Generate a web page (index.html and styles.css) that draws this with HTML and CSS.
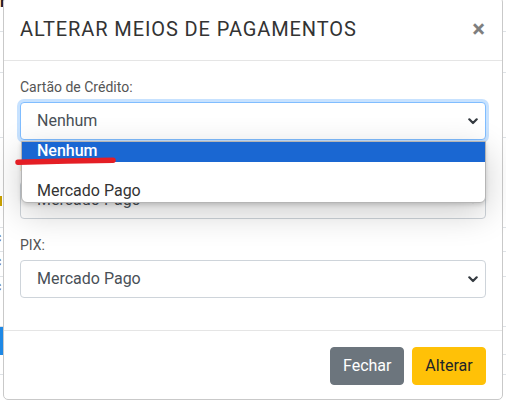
FILE: index.html
```html
<!DOCTYPE html>
<html lang="pt-BR">
<head>
<meta charset="utf-8">
<title>Alterar meios de pagamentos</title>
<link rel="stylesheet" href="styles.css">
</head>
<body>
<div class="page">
  <div class="prow prow-top"><span class="frag-dark">r</span></div>
  <div class="prow prow-a"></div>
  <div class="prow prow-b"></div>
  <div class="prow prow-c"><span class="frag-yellow"></span></div>
  <div class="prow prow-d"><span class="frag-c">c</span></div>
  <div class="prow prow-e"><span class="frag-c">c</span></div>
  <div class="prow prow-f"><span class="frag-c">c</span></div>
  <div class="prow prow-g"><span class="frag-blue">r</span></div>
  <div class="prow prow-h"></div>
</div>

<div class="modal">
  <div class="modal-header">
    <h5 class="modal-title">ALTERAR MEIOS DE PAGAMENTOS</h5>
    <span class="close">&times;</span>
  </div>
  <div class="modal-body">
    <div class="form-group">
      <label class="form-label">Cartão de Crédito:</label>
      <div class="select select-focus">
        <span class="select-text">Nenhum</span>
        <svg class="chev" width="10" height="7" viewBox="0 0 10 7"><path d="M1.3 1.3 L5 5 L8.7 1.3" fill="none" stroke="#343a40" stroke-width="2.2" stroke-linecap="round" stroke-linejoin="round"/></svg>
      </div>
    </div>
    <div class="form-group">
      <label class="form-label">Boleto:</label>
      <div class="select">
        <span class="select-text">Mercado Pago</span>
        <svg class="chev" width="10" height="7" viewBox="0 0 10 7"><path d="M1.3 1.3 L5 5 L8.7 1.3" fill="none" stroke="#343a40" stroke-width="2.2" stroke-linecap="round" stroke-linejoin="round"/></svg>
      </div>
    </div>
    <div class="form-group">
      <label class="form-label">PIX:</label>
      <div class="select">
        <span class="select-text">Mercado Pago</span>
        <svg class="chev" width="10" height="7" viewBox="0 0 10 7"><path d="M1.3 1.3 L5 5 L8.7 1.3" fill="none" stroke="#343a40" stroke-width="2.2" stroke-linecap="round" stroke-linejoin="round"/></svg>
      </div>
    </div>
  </div>
  <div class="modal-footer">
    <button class="btn btn-secondary">Fechar</button>
    <button class="btn btn-warning">Alterar</button>
  </div>

  <div class="dropdown">
    <div class="opt opt-selected">Nenhum</div>
    <div class="opt"></div>
    <div class="opt">Mercado Pago</div>
  </div>
  <svg class="mark" width="104" height="12" viewBox="0 0 104 12"><path d="M3 7.2 C 30 6.6, 70 5.6, 98 5.2" fill="none" stroke="#e41e25" stroke-width="5.5" stroke-linecap="round"/></svg>
</div>
</body>
</html>
```

FILE: styles.css
```css
* { box-sizing: border-box; }
html, body { margin: 0; padding: 0; }
body {
  width: 506px;
  height: 400px;
  overflow: hidden;
  background: #ffffff;
  font-family: Roboto, "Liberation Sans", sans-serif;
  position: relative;
}

/* background page fragments */
.page { display: flex; flex-direction: column; }
.prow { border-bottom: 1px solid #dee2e6; position: relative; font-size: 16px; line-height: 1; color: #555; }
.prow-top { height: 32px; }
.prow-a { height: 41px; }
.prow-b { height: 65px; }
.prow-c { height: 90px; }
.prow-d { height: 24px; }
.prow-e { height: 25px; }
.prow-f { height: 50px; }
.prow-g { height: 28px; }
.prow-h { height: 20px; }
.frag-dark { display: block; font-weight: 700; color: #222; margin-top: -6px; }
.frag-c { display: block; margin-top: 2px; margin-left: -6px; font-size: 14px; }
.frag-yellow { display: block; width: 2px; height: 10px; background: #c9a100; margin-top: 58px; }
.frag-blue { display: block; width: 14px; height: 28px; background: #1e88e5; color: #fff; padding: 6px 0 0 0; margin-left: -11px; }

/* modal */
.modal {
  position: absolute;
  left: 3px;
  top: -3px;
  width: 500px;
  background: #fff;
  border: 1px solid #c9c9c9;
  border-radius: 5px;
}
.modal-header {
  display: flex;
  align-items: flex-start;
  justify-content: space-between;
  padding: 16px 16px 16px 16px;
  border-bottom: 1px solid #e5e5e5;
}
.modal-title {
  margin: 0;
  font-size: 20px;
  line-height: 30px;
  font-weight: 400;
  letter-spacing: 0.9px;
  color: #333;
}
.close {
  font-size: 24px;
  font-weight: 700;
  line-height: 30px;
  color: #000;
  opacity: 0.5;
  margin-right: 1px;
}
.modal-body { padding: 16px; }
.form-group { margin-bottom: 16px; }
.form-label {
  display: block;
  font-size: 14px;
  line-height: 21px;
  color: #555;
  margin-bottom: 4px;
}
.select {
  display: flex;
  align-items: center;
  justify-content: space-between;
  height: 38px;
  padding: 0 7px 0 16px;
  border: 1px solid #ced4da;
  border-radius: 4px;
  background: #fff;
  font-size: 16px;
  color: #495057;
}
.select-focus {
  border-color: #80bdff;
  box-shadow: 0 0 0 3px rgba(0, 123, 255, 0.22);
}
.select-text { line-height: 24px; }
.chev { display: block; }

.modal-footer {
  display: flex;
  justify-content: flex-end;
  gap: 8px;
  padding: 16px 16px 14px;
  border-top: 1px solid #e5e5e5;
}
.btn {
  height: 38px;
  padding: 0 12px;
  border: 1px solid transparent;
  border-radius: 4px;
  font-family: Roboto, "Liberation Sans", sans-serif;
  font-size: 16px;
  line-height: 24px;
  width: 74px;
}
.btn-secondary { background: #6c757d; border-color: #6c757d; color: #fff; }
.btn-warning { background: #ffc107; border-color: #ffc107; color: #212529; }

/* open select list */
.dropdown {
  position: absolute;
  left: 17px;
  top: 143px;
  width: 465px;
  background: #fff;
  border: 1px solid #b5b5b5;
  border-radius: 0 0 6px 6px;
  box-shadow: 0 10px 34px rgba(0, 0, 0, 0.2), 0 2px 4px rgba(0, 0, 0, 0.15);
  overflow: hidden;
}
.opt {
  height: 20px;
  padding-left: 15px;
  font-size: 16px;
  line-height: 18px;
  color: #333;
}
.opt-selected {
  background: #1a67d2;
  color: #fff;
  font-weight: 500;
  line-height: 17px;
}
.mark {
  position: absolute;
  left: 11px;
  top: 157px;
}
```
